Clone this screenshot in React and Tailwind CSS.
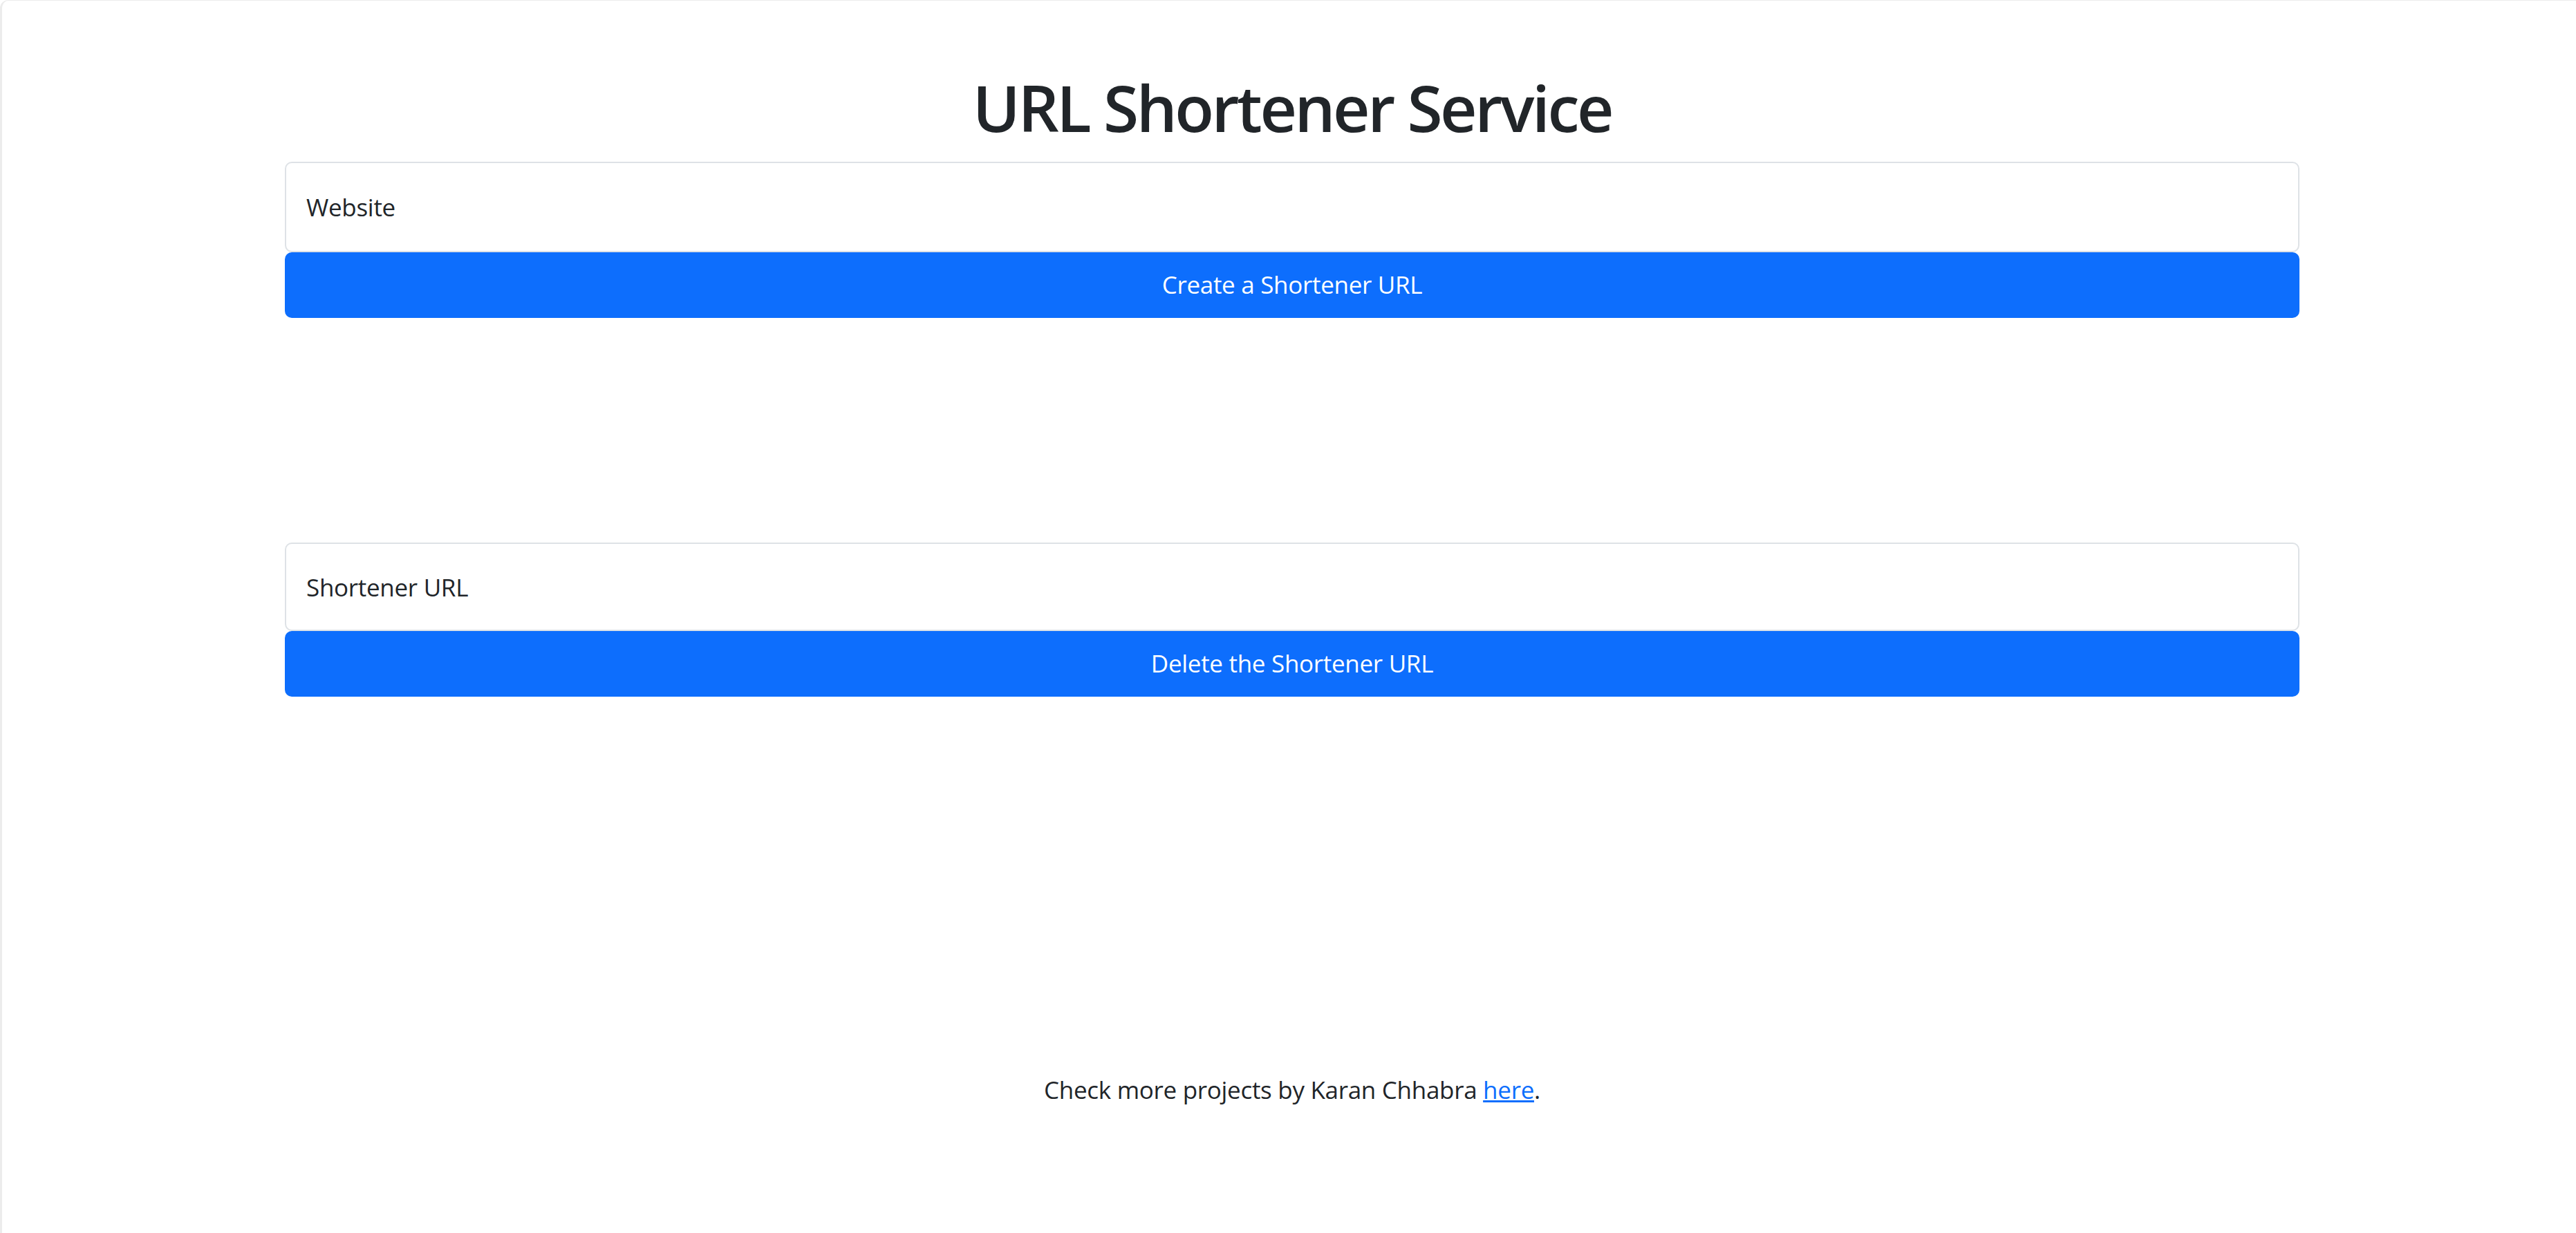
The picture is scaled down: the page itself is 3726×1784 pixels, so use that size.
import React, { useState } from "react";

const App = () => {
  const [website, setWebsite] = useState("");
  const [shortUrl, setShortUrl] = useState("");

  return (
    <div
      className="min-h-screen bg-white text-[#212529] border-l-[3px] border-t border-[#ececec] rounded-tl-[12px]"
      style={{ fontFamily: '"Open Sans", "Noto Sans", "Liberation Sans", sans-serif' }}
    >
      <div className="w-[2914px] ml-[409px] flex flex-col">
        <h1 className="mt-[96px] mb-[20px] text-center text-[93px] leading-[117px] font-semibold tracking-[-3.5px]">
          URL Shortener Service
        </h1>

        {/* create */}
        <input
          type="text"
          value={website}
          onChange={(e) => setWebsite(e.target.value)}
          placeholder="Website"
          className="h-[131px] w-full px-[29px] text-[35px] tracking-[-0.3px] border-2 border-[#dee2e6] rounded-[10px] bg-white placeholder:text-[#212529] outline-none"
        />
        <button className="h-[95px] w-full bg-[#0d6efd] text-white text-[35px] tracking-[-0.3px] rounded-[10px]">
          Create a Shortener URL
        </button>

        {/* delete */}
        <input
          type="text"
          value={shortUrl}
          onChange={(e) => setShortUrl(e.target.value)}
          placeholder="Shortener URL"
          className="mt-[325px] h-[128px] w-full px-[29px] text-[35px] tracking-[-0.3px] border-2 border-[#dee2e6] rounded-[10px] bg-white placeholder:text-[#212529] outline-none"
        />
        <button className="h-[95px] w-full bg-[#0d6efd] text-white text-[35px] tracking-[-0.3px] rounded-[10px]">
          Delete the Shortener URL
        </button>

        <p className="mt-[539px] text-center text-[35px] tracking-[-0.3px] leading-[60px]">
          Check more projects by Karan Chhabra{" "}
          <a href="#" className="text-[#0d6efd] underline">
            here
          </a>
          .
        </p>
      </div>
    </div>
  );
};

export default App;
